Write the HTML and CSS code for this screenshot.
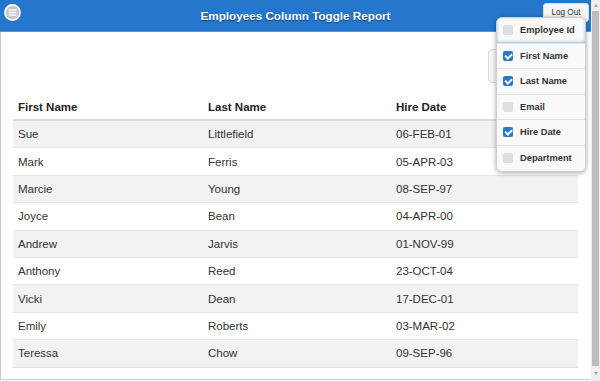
FILE: index.html
```html
<!DOCTYPE html>
<html lang="en">
<head>
  <meta charset="UTF-8">
  <meta name="viewport" content="width=device-width, initial-scale=1.0">
  <title>Employees Column Toggle Report</title>
  <link rel="stylesheet" href="styles.css">
</head>
<body>
  <div class="page">
    <header class="bar">
      <a class="menu-btn" href="#">
        <svg width="17" height="17" viewBox="0 0 17 17">
          <circle cx="8.5" cy="8.5" r="7.6" fill="#c9c9c9" stroke="#fff" stroke-width="1.6"/>
          <rect x="4.6" y="5.2" width="7.8" height="1.5" fill="#f4f4f4"/>
          <rect x="4.6" y="7.8" width="7.8" height="1.5" fill="#f4f4f4"/>
          <rect x="4.6" y="10.4" width="7.8" height="1.5" fill="#f4f4f4"/>
        </svg>
      </a>
      <h1>Employees Column Toggle Report</h1>
      <a class="logout-btn" href="#">Log Out</a>
    </header>

    <div class="content">
      <div class="toolbar">
        <button class="columns-btn">Columns...</button>
      </div>

      <table class="report">
        <colgroup>
          <col class="col-first">
          <col class="col-last">
          <col>
        </colgroup>
        <thead>
          <tr>
            <th>First Name</th>
            <th>Last Name</th>
            <th>Hire Date</th>
          </tr>
        </thead>
        <tbody>
          <tr><td>Sue</td><td>Littlefield</td><td>06-FEB-01</td></tr>
          <tr><td>Mark</td><td>Ferris</td><td>05-APR-03</td></tr>
          <tr><td>Marcie</td><td>Young</td><td>08-SEP-97</td></tr>
          <tr><td>Joyce</td><td>Bean</td><td>04-APR-00</td></tr>
          <tr><td>Andrew</td><td>Jarvis</td><td>01-NOV-99</td></tr>
          <tr><td>Anthony</td><td>Reed</td><td>23-OCT-04</td></tr>
          <tr><td>Vicki</td><td>Dean</td><td>17-DEC-01</td></tr>
          <tr><td>Emily</td><td>Roberts</td><td>03-MAR-02</td></tr>
          <tr><td>Teressa</td><td>Chow</td><td>09-SEP-96</td></tr>
        </tbody>
      </table>
    </div>

    <!-- Column toggle popup -->
    <div class="popup">
      <label class="popup-item focused"><span class="check"></span>Employee Id</label>
      <label class="popup-item"><span class="check on"></span>First Name</label>
      <label class="popup-item"><span class="check on"></span>Last Name</label>
      <label class="popup-item"><span class="check"></span>Email</label>
      <label class="popup-item"><span class="check on"></span>Hire Date</label>
      <label class="popup-item last"><span class="check"></span>Department</label>
    </div>
  </div>

  <div class="scrollbar">
    <span class="arrow up"></span>
    <span class="thumb"></span>
    <span class="arrow down"></span>
  </div>
</body>
</html>
```

FILE: styles.css
```css
body {
  margin: 0;
  width: 600px;
  height: 381px;
  overflow: hidden;
  display: flex;
  background-color: #fff;
  font-family: 'Liberation Sans', Arial, sans-serif;
  color: #333;
}

.page {
  position: relative;
  width: 591px;
  height: 380px;
  display: flex;
  flex-direction: column;
}

/* header bar */
.bar {
  height: 31px;
  background-color: #2477cd;
  border-bottom: 1px solid #5596da;
  display: grid;
  grid-template-columns: 1fr auto 1fr;
  align-items: center;
}

.bar h1 {
  margin: 0;
  font-size: 11.7px;
  font-weight: bold;
  color: #fff;
  text-shadow: 0 1px 1px rgba(0, 0, 0, 0.45);
}

.menu-btn {
  align-self: start;
  justify-self: start;
  display: block;
  width: 17px;
  height: 17px;
  margin: 4px 0 0 4px;
}

.menu-btn svg {
  display: block;
}

.logout-btn {
  align-self: start;
  justify-self: end;
  margin: 3px 2px 0 0;
  width: 46px;
  height: 19px;
  box-sizing: border-box;
  background-color: #f6f6f6;
  border: 1px solid #dadada;
  border-radius: 3px;
  font-size: 8.2px;
  line-height: 17px;
  text-align: center;
  color: #333;
  text-decoration: none;
}

/* page content */
.content {
  flex: 1;
  border-left: 1px solid #c9c9c9;
  border-bottom: 1px solid #c9c9c9;
  padding: 17px 13px 0 12px;
}

.toolbar {
  display: flex;
  justify-content: flex-end;
  height: 34px;
  margin-bottom: 12px;
}

.columns-btn {
  width: 90px;
  height: 34px;
  background-color: #f6f6f6;
  border: 1px solid #d8d8d8;
  border-radius: 4px;
  font-family: inherit;
  font-size: 11px;
  color: #333;
}

.report {
  width: 100%;
  border-collapse: collapse;
  table-layout: fixed;
}

.col-first {
  width: 190px;
}

.col-last {
  width: 188px;
}

.report th,
.report td {
  text-align: left;
  padding: 0 5px;
  font-size: 11.5px;
  line-height: 16px;
}

.report th {
  height: 24px;
  font-weight: bold;
  color: #222;
  border-bottom: 2px solid #dcdcdc;
}

.report td {
  height: 26.4px;
  border-bottom: 1px solid #e4e4e4;
}

.report tbody tr:nth-child(odd) td {
  background-color: #f2f2f2;
}

/* column toggle popup */
.popup {
  position: absolute;
  left: 496px;
  top: 17px;
  width: 90px;
  box-sizing: border-box;
  background-color: #fff;
  border: 1px solid #cfcfcf;
  border-radius: 6px;
  box-shadow: 0 1px 5px rgba(0, 0, 0, 0.35);
  overflow: hidden;
}

.popup-item {
  display: flex;
  align-items: center;
  height: 25.5px;
  box-sizing: border-box;
  padding-left: 6px;
  border-bottom: 1px solid #e1e1e1;
  font-size: 9.3px;
  font-weight: bold;
  color: #333;
  background-color: #f9f9f9;
}

.popup-item.last {
  border-bottom: none;
}

.popup-item.focused {
  box-shadow: inset 0 -1px 3px rgba(56, 140, 220, 0.55);
}

.check {
  width: 10px;
  height: 10px;
  margin-right: 7px;
  border-radius: 2px;
  background-color: #dedede;
  position: relative;
}

.check.on {
  background-color: #2a78cc;
}

.check.on::after {
  content: "";
  position: absolute;
  left: 3.2px;
  top: 0.8px;
  width: 2.8px;
  height: 5.4px;
  border: solid #fff;
  border-width: 0 2px 2px 0;
  transform: rotate(45deg);
}

/* fake window scrollbar */
.scrollbar {
  width: 9px;
  height: 381px;
  background-color: #efefef;
  display: flex;
  flex-direction: column;
  align-items: center;
}

.arrow {
  width: 0;
  height: 0;
  border-left: 2.5px solid transparent;
  border-right: 2.5px solid transparent;
}

.arrow.up {
  margin: 4px 0 4px;
  border-bottom: 3px solid #a0a0a0;
}

.arrow.down {
  margin: 6px 0 0;
  border-top: 3px solid #a0a0a0;
}

.thumb {
  width: 7px;
  height: 355px;
  background-color: #bdbdbd;
}
```
